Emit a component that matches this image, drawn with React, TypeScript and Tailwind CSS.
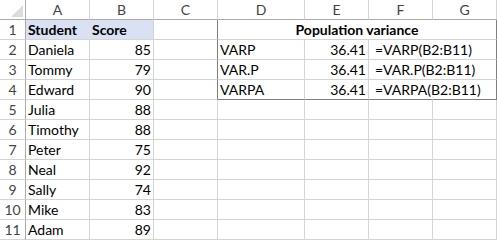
import React from "react";

const G = "border-[#d4d4d4]";

type CellProps = {
  children?: React.ReactNode;
  className?: string;
};

function Cell({ children, className = "" }: CellProps) {
  return (
    <div
      className={`box-border h-[20px] border-r border-b flex items-end px-[2px] whitespace-nowrap text-[14px] leading-[17px] pb-[1px] text-black ${className}`}
    >
      {children}
    </div>
  );
}

const names = ["Daniela", "Tommy", "Edward", "Julia", "Timothy", "Peter", "Neal", "Sally", "Mike", "Adam"];
const scores = [85, 79, 90, 88, 88, 75, 92, 74, 83, 89];
const funcs = [
  ["VARP", "=VARP(B2:B11)"],
  ["VAR.P", "=VAR.P(B2:B11)"],
  ["VARPA", "=VARPA(B2:B11)"],
];

export default function App() {
  const rows: React.ReactNode[] = [];

  rows.push(
    <div key="corner" className="box-border h-[20px] border-r border-b border-r-[#ababab] border-b-[#ababab] bg-white relative">
      <svg width="26" height="20" className="absolute left-0 top-0">
        <polygon points="11,17 23,17 23,5" fill="#dcdcdc" />
      </svg>
    </div>
  );
  ["A", "B", "C", "D", "E", "F", "G"].forEach((l) => {
    rows.push(
      <div
        key={"h" + l}
        className={`box-border h-[20px] border-r border-b ${G} border-b-[#ababab] flex items-end justify-center pb-[1px] text-[14px] leading-[17px] text-[#444]`}
      >
        {l}
      </div>
    );
  });

  for (let r = 1; r <= 11; r++) {
    rows.push(
      <div
        key={"rn" + r}
        className={`box-border h-[20px] border-r border-b border-r-[#ababab] ${G} flex items-end justify-center pb-[1px] text-[14px] leading-[17px] text-[#444]`}
      >
        {r}
      </div>
    );
    if (r === 1) {
      rows.push(
        <Cell key="a1" className={`bg-[#d9e1f2] ${G} border-r-[#d9e1f2] font-bold`}>
          Student
        </Cell>
      );
      rows.push(
        <Cell key="b1" className={`bg-[#d9e1f2] ${G} font-bold`}>
          Score
        </Cell>
      );
    } else {
      rows.push(
        <Cell key={"a" + r} className={G}>
          {names[r - 2]}
        </Cell>
      );
      rows.push(
        <Cell key={"b" + r} className={`${G} justify-end`}>
          {scores[r - 2]}
        </Cell>
      );
    }
    const inTable = r <= 4;
    rows.push(
      <Cell key={"c" + r} className={`${G} ${inTable ? "border-r-[#7f7f7f]" : ""}`} />
    );
    if (r === 1) {
      rows.push(
        <Cell key="d1" className={`col-span-4 ${G} border-r-[#7f7f7f] justify-center font-bold`}>
          Population variance
        </Cell>
      );
    } else if (r <= 4) {
      const [name, formula] = funcs[r - 2];
      const bb = r === 4 ? "border-b-[#7f7f7f]" : "";
      rows.push(
        <Cell key={"d" + r} className={`${G} ${bb}`}>
          {name}
        </Cell>
      );
      rows.push(
        <Cell key={"e" + r} className={`${G} ${bb} justify-end`}>
          36.41
        </Cell>
      );
      rows.push(
        <Cell key={"f" + r} className={`${G} ${bb} border-r-transparent pl-[6px] overflow-visible relative z-10`}>
          {formula}
        </Cell>
      );
      rows.push(
        <Cell key={"g" + r} className={`${G} ${bb} border-r-[#7f7f7f]`} />
      );
    } else {
      ["d", "e", "f", "g"].forEach((c) => rows.push(<Cell key={c + r} className={G} />));
    }
  }

  return (
    <div
      className="w-[497px] h-[240px] bg-white overflow-hidden"
      style={{ fontFamily: "Lato, 'Liberation Sans', sans-serif" }}
    >
      <div className="grid grid-cols-[26px_64px_64px_64px_87px_64px_64px_64px]">{rows}</div>
    </div>
  );
}
